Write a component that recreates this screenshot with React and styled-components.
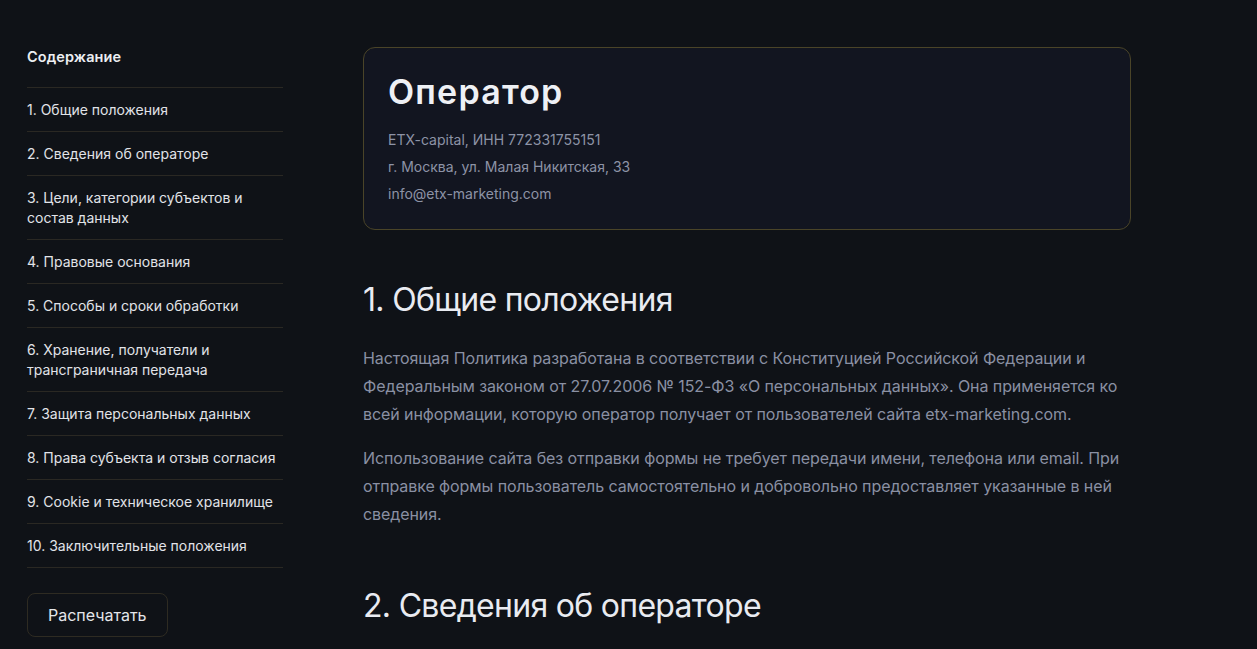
import React from 'react'
import styled, { createGlobalStyle } from 'styled-components'

const GlobalStyle = createGlobalStyle`
  html, body {
    margin: 0;
    padding: 0;
    background: #0f1217;
  }
  body {
    font-family: Inter, "Noto Sans", sans-serif;
    -webkit-font-smoothing: antialiased;
  }
`

const Page = styled.div`
  display: grid;
  grid-template-columns: 256px 768px;
  column-gap: 80px;
  padding: 47px 27px 0;
  min-height: 649px;
  box-sizing: border-box;
  background: #0f1217;
  overflow: hidden;
`

const Sidebar = styled.aside`
  display: flex;
  flex-direction: column;
`

const TocTitle = styled.div`
  font-family: Inter, sans-serif;
  font-size: 14.5px;
  font-weight: 600;
  line-height: 20px;
  letter-spacing: 0.1px;
  color: #eceef2;
  padding-bottom: 20px;
  border-bottom: 1px solid #2a2823;
`

const TocList = styled.nav`
  display: flex;
  flex-direction: column;
`

const TocItem = styled.a`
  display: block;
  padding: 12px 0 11px;
  font-size: 14px;
  line-height: 20px;
  color: #e1e3e8;
  text-decoration: none;
  border-bottom: 1px solid #2a2823;
`

const PrintButton = styled.button`
  align-self: flex-start;
  margin-top: 25px;
  height: 44px;
  padding: 0 20px;
  background: transparent;
  border: 1px solid #2e2b22;
  border-radius: 8px;
  font-family: Inter, sans-serif;
  font-size: 16px;
  color: #e4e6ea;
  cursor: pointer;
`

const Main = styled.main`
  display: flex;
  flex-direction: column;
`

const Card = styled.div`
  background: #121520;
  border: 1px solid #4a4428;
  border-radius: 12px;
  padding: 22px 24px 22px;
`

const CardTitle = styled.h1`
  margin: 0 0 12px;
  font-family: Inter, sans-serif;
  font-size: 34px;
  font-weight: 600;
  line-height: 44px;
  letter-spacing: 1.2px;
  color: #eef0f5;
`

const InfoLine = styled.div`
  font-size: 14px;
  line-height: 27px;
  color: #8d93a6;
`

const Section = styled.section`
  margin-top: ${p => p.$first ? '50px' : '42px'};
`

const SectionTitle = styled.h2`
  margin: 0 0 24px;
  font-family: Inter, sans-serif;
  font-size: 32px;
  font-weight: 400;
  line-height: 40px;
  letter-spacing: -0.7px;
  color: #e9ebf1;
`

const Paragraph = styled.p`
  margin: 0 0 16px;
  font-size: 16px;
  line-height: 28px;
  letter-spacing: -0.08px;
  color: #8a90a3;
`

const toc = [
  '1. Общие положения',
  '2. Сведения об операторе',
  '3. Цели, категории субъектов и состав данных',
  '4. Правовые основания',
  '5. Способы и сроки обработки',
  '6. Хранение, получатели и трансграничная передача',
  '7. Защита персональных данных',
  '8. Права субъекта и отзыв согласия',
  '9. Cookie и техническое хранилище',
  '10. Заключительные положения',
]

export default function App() {
  return (
    <>
      <GlobalStyle />
      <Page>
        <Sidebar>
          <TocTitle>Содержание</TocTitle>
          <TocList>
            {toc.map((t, i) => (
              <TocItem key={i} href={`#s${i + 1}`}>{t}</TocItem>
            ))}
          </TocList>
          <PrintButton>Распечатать</PrintButton>
        </Sidebar>
        <Main>
          <Card>
            <CardTitle>Оператор</CardTitle>
            <InfoLine>ETX-capital, ИНН 772331755151</InfoLine>
            <InfoLine>г. Москва, ул. Малая Никитская, 33</InfoLine>
            <InfoLine>info@etx-marketing.com</InfoLine>
          </Card>
          <Section $first id="s1">
            <SectionTitle>1. Общие положения</SectionTitle>
            <Paragraph>
              Настоящая Политика разработана в соответствии с Конституцией Российской Федерации и
              Федеральным законом от 27.07.2006 № 152-ФЗ «О персональных данных». Она применяется ко
              всей информации, которую оператор получает от пользователей сайта etx-marketing.com.
            </Paragraph>
            <Paragraph>
              Использование сайта без отправки формы не требует передачи имени, телефона или email. При
              отправке формы пользователь самостоятельно и добровольно предоставляет указанные в ней
              сведения.
            </Paragraph>
          </Section>
          <Section id="s2">
            <SectionTitle>2. Сведения об операторе</SectionTitle>
          </Section>
        </Main>
      </Page>
    </>
  )
}
